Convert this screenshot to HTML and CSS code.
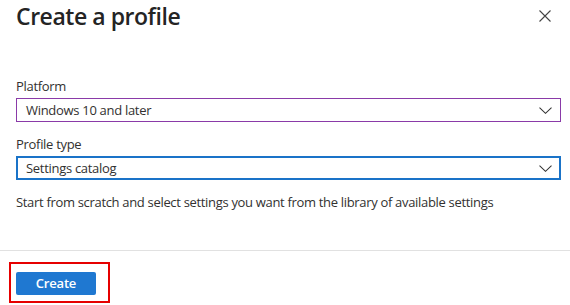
FILE: index.html
```html
<!DOCTYPE html>
<html>
<head>
<meta charset="utf-8">
<link rel="stylesheet" href="styles.css">
</head>
<body>
<div class="panel">
  <div class="header">
    <h1 class="title">Create a profile</h1>
    <button class="close" aria-label="Close">
      <svg width="12" height="12" viewBox="0 0 12 12"><path d="M0.5 0.5 L11.5 11.5 M11.5 0.5 L0.5 11.5" stroke="#444" stroke-width="1.1" fill="none"/></svg>
    </button>
  </div>
  <div class="body">
    <div class="field">
      <div class="label">Platform</div>
      <div class="select select-purple">
        <span>Windows 10 and later</span>
        <svg class="chev" width="13" height="7" viewBox="0 0 13 7"><path d="M0.5 0.6 L6.5 6.3 L12.5 0.6" stroke="#333" stroke-width="1.05" fill="none"/></svg>
      </div>
    </div>
    <div class="field">
      <div class="label">Profile type</div>
      <div class="select select-blue">
        <span>Settings catalog</span>
        <svg class="chev" width="13" height="7" viewBox="0 0 13 7"><path d="M0.5 0.6 L6.5 6.3 L12.5 0.6" stroke="#333" stroke-width="1.05" fill="none"/></svg>
      </div>
    </div>
    <p class="desc">Start from scratch and select settings you want from the library of available settings</p>
  </div>
  <div class="footer">
    <div class="highlight">
      <button class="primary">Create</button>
    </div>
  </div>
</div>
</body>
</html>
```
FILE: styles.css
```css
* { box-sizing: border-box; }
html, body { margin: 0; padding: 0; background: #fff; }
body {
  font-family: "Open Sans", "Noto Sans", sans-serif;
  color: #323130;
  width: 570px;
  height: 305px;
  overflow: hidden;
}
.panel { display: flex; flex-direction: column; height: 305px; }
.header {
  display: flex;
  justify-content: space-between;
  align-items: flex-start;
  padding: 0 19px 0 16px;
  height: 76px;
}
.title {
  margin: 0;
  font-size: 23px;
  font-weight: 600;
  line-height: 32px;
  color: #242424;
  letter-spacing: -0.45px;
}
.close {
  background: none;
  border: 0;
  padding: 0;
  margin-top: 10px;
  width: 12px;
  height: 12px;
  display: flex;
}
.body { padding: 0 9px 0 16px; }
.field { margin-bottom: 12px; }
.label {
  font-size: 13px;
  line-height: 20px;
  margin-bottom: 2px;
  color: #323130;
  letter-spacing: -0.3px;
}
.select {
  display: flex;
  align-items: center;
  justify-content: space-between;
  height: 24px;
  padding: 0 8px 0 9px;
  font-size: 13px;
  color: #323130;
  letter-spacing: -0.3px;
}
.select-purple { border: 1px solid #8a3aa8; }
.select-blue { border: 2px solid #1a73c8; padding-left: 8px; padding-right: 7px; }
.desc {
  margin: 12px 0 0 0;
  font-size: 13px;
  line-height: 20px;
  color: #323130;
  letter-spacing: -0.32px;
}
.footer {
  margin-top: auto;
  border-top: 1px solid #e1e1e1;
  height: 55px;
  padding: 11px 0 0 9px;
}
.highlight {
  width: 101px;
  height: 41px;
  border: 2px solid #e60000;
  padding: 7px 0 0 5px;
}
.primary {
  width: 80px;
  height: 23px;
  background: #1f78d1;
  color: #fff;
  border: 0;
  border-radius: 2px;
  font-family: "Open Sans", sans-serif;
  font-weight: 600;
  font-size: 13px;
  padding: 0;
  letter-spacing: -0.2px;
}
```
